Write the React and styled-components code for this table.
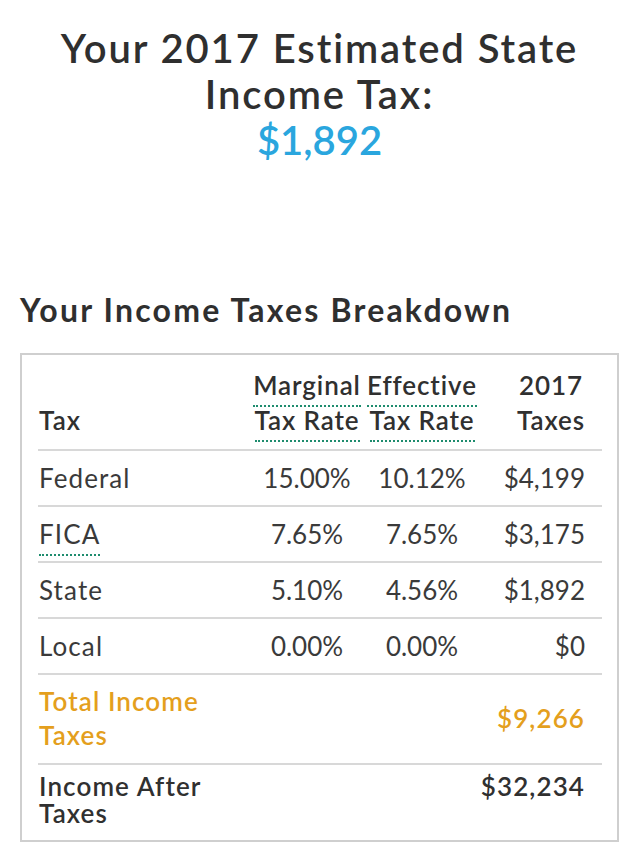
import React from "react";
import styled, { createGlobalStyle } from "styled-components";

const Global = createGlobalStyle`
  html, body { margin: 0; padding: 0; background: #fff; }
  body { font-family: Lato, "Open Sans", Arial, sans-serif; color: #333; }
  * { box-sizing: border-box; }
`;

const Page = styled.div`
  width: 639px;
  padding: 0 20px;
`;

const Hero = styled.h1`
  margin: 25px 0 0;
  text-align: center;
  font-size: 40px;
  line-height: 46px;
  font-weight: 600;
  color: #2f2f2f;
  letter-spacing: 1.9px;
`;

const Amount = styled.span`
  display: block;
  color: #2aa6de;
  letter-spacing: 0;
`;

const SectionTitle = styled.h2`
  margin: 127px 0 0;
  font-size: 32px;
  line-height: 40px;
  font-weight: 700;
  color: #2f2f2f;
  letter-spacing: 2.2px;
`;

const Card = styled.div`
  margin-top: 23px;
  border: 2px solid #cfcfcf;
  padding: 0 15px 0 16px;
`;

const Row = styled.div`
  display: grid;
  grid-template-columns: 210px 118px 112px 1fr;
  align-items: ${(p) => p.$align || "center"};
  border-bottom: ${(p) => (p.$last ? "none" : "2px solid #d8d8d8")};
  padding: ${(p) => p.$pad || "0"};
  min-height: ${(p) => p.$h || "auto"};
  font-size: 26px;
  line-height: ${(p) => p.$lh || "35px"};
  color: ${(p) => p.$color || "#3a3a3a"};
  font-weight: ${(p) => p.$weight || 400};
`;

const Cell = styled.div`
  text-align: ${(p) => p.$align || "left"};
  padding-right: ${(p) => (p.$end ? "17px" : "0")};
  padding-left: ${(p) => (p.$label ? "1px" : "0")};
  letter-spacing: ${(p) => (p.$label ? "1.1px" : p.$wide ? "1.1px" : "0")};
  white-space: ${(p) => (p.$label ? "normal" : "nowrap")};
`;

const Dotted = styled.span`
  border-bottom: 2px dotted #1e8c6e;
  padding-bottom: 4px;
`;

const HeadStack = styled.div`
  display: inline-block;
  text-align: center;
`;

const HeadText = styled.span`
  letter-spacing: 0.9px;
`;

const rows = [
  { name: "Federal", m: "15.00%", e: "10.12%", t: "$4,199" },
  { name: "FICA", m: "7.65%", e: "7.65%", t: "$3,175", dotted: true },
  { name: "State", m: "5.10%", e: "4.56%", t: "$1,892" },
  { name: "Local", m: "0.00%", e: "0.00%", t: "$0" },
];

export default function App() {
  return (
    <Page>
      <Global />
      <Hero>
        Your 2017 Estimated State
        <br />
        Income Tax:
        <Amount>$1,892</Amount>
      </Hero>
      <SectionTitle>Your Income Taxes Breakdown</SectionTitle>
      <Card>
        <Row $align="end" $pad="13px 0 11px" $weight={600} $color="#303030">
          <Cell $label>Tax</Cell>
          <Cell $align="center">
            <HeadText>
              <Dotted>Marginal</Dotted>
              <br />
              <Dotted>Tax Rate</Dotted>
            </HeadText>
          </Cell>
          <Cell $align="center">
            <HeadText>
              <Dotted>Effective</Dotted>
              <br />
              <Dotted>Tax Rate</Dotted>
            </HeadText>
          </Cell>
          <Cell $align="right" $end>
            <HeadStack>
              <HeadText>
                2017
                <br />
                Taxes
              </HeadText>
            </HeadStack>
          </Cell>
        </Row>
        {rows.map((r) => (
          <Row key={r.name} $h="56px">
            <Cell $label>{r.dotted ? <Dotted>{r.name}</Dotted> : r.name}</Cell>
            <Cell $align="center">{r.m}</Cell>
            <Cell $align="center">{r.e}</Cell>
            <Cell $align="right" $end>{r.t}</Cell>
          </Row>
        ))}
        <Row $pad="9px 0 11px" $lh="34px" $color="#e49f1d" $weight={600}>
          <Cell $label>Total Income Taxes</Cell>
          <Cell />
          <Cell />
          <Cell $align="right" $end $wide>$9,266</Cell>
        </Row>
        <Row $last $align="start" $pad="8px 0 13px" $lh="27px" $color="#303030" $weight={600}>
          <Cell $label>Income After Taxes</Cell>
          <Cell />
          <Cell />
          <Cell $align="right" $end $wide>$32,234</Cell>
        </Row>
      </Card>
    </Page>
  );
}
